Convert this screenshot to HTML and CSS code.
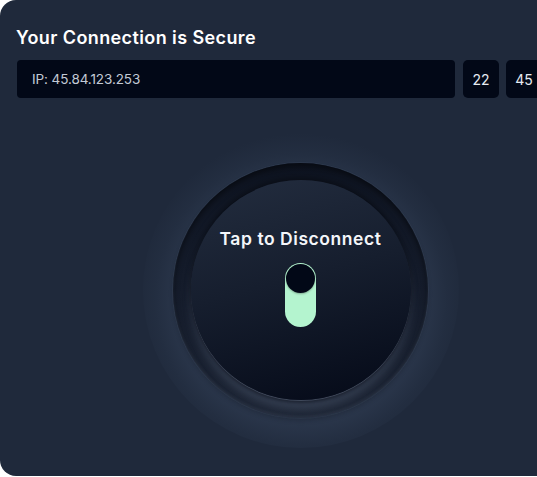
FILE: index.html
```html
<!DOCTYPE html>
<html lang="en">
<head>
<meta charset="utf-8">
<title>VPN</title>
<link rel="stylesheet" href="styles.css">
</head>
<body>
<div class="card">
  <h1 class="title">Your Connection is Secure</h1>
  <div class="info-row">
    <div class="ip-box">IP: 45.84.123.253</div>
    <div class="num-box">22</div>
    <div class="num-box">45</div>
    <div class="num-box">10</div>
  </div>
  <div class="stage">
    <div class="halo">
      <div class="rim">
        <button class="disc" type="button">
          <span class="disc-label">Tap to Disconnect</span>
          <span class="toggle"><span class="knob"></span></span>
        </button>
      </div>
    </div>
  </div>
</div>
</body>
</html>
```

FILE: styles.css
```css
html, body {
  margin: 0;
  padding: 0;
  background: #ffffff;
  overflow: hidden;
}

body {
  font-family: "Inter", "Noto Sans", sans-serif;
  width: 537px;
  height: 477px;
}

.card {
  box-sizing: border-box;
  width: 600px;
  height: 476px;
  background: #1f293b;
  border-radius: 16px;
  padding: 25px 15px 0 17px;
  display: flex;
  flex-direction: column;
}

.title {
  margin: 0 0 0 -1px;
  font-size: 18px;
  line-height: 26px;
  font-weight: 600;
  color: #ffffff;
  letter-spacing: 0.4px;
}

.info-row {
  margin-top: 9px;
  display: flex;
  gap: 7px;
  height: 38px;
}

.ip-box {
  flex: 1;
  background: #020817;
  border-radius: 4px;
  display: flex;
  align-items: center;
  padding-left: 15px;
  font-size: 13.5px;
  letter-spacing: -0.1px;
  color: #c3cad6;
}

.num-box {
  width: 36px;
  flex: none;
  background: #020817;
  border-radius: 5px;
  display: flex;
  align-items: center;
  justify-content: center;
  font-size: 14px;
  color: #e6ebf2;
}

.ip-box + .num-box {
  margin-left: 1px;
}

.stage {
  display: flex;
  justify-content: center;
  margin-top: 34px;
  padding-right: 1px;
}

.halo {
  width: 316px;
  height: 316px;
  border-radius: 50%;
  display: flex;
  align-items: center;
  justify-content: center;
  background: radial-gradient(circle 166px at 50% 53%, rgba(66, 82, 108, 0.5) 0%, rgba(60, 75, 100, 0.42) 72%, rgba(48, 62, 84, 0.22) 88%, rgba(31, 41, 59, 0) 100%);
}

.rim {
  width: 255px;
  height: 255px;
  border-radius: 50%;
  display: flex;
  align-items: center;
  justify-content: center;
  background: linear-gradient(180deg, #0e1421 0%, #141b2a 45%, #1d2535 100%);
  box-shadow:
    0 0 0 1px rgba(90, 105, 130, 0.14),
    0 3px 4px rgba(10, 15, 25, 0.25),
    inset 0 -2px 3px rgba(140, 155, 180, 0.12),
    inset 0 4px 6px rgba(0, 0, 0, 0.45);
}

.disc {
  width: 220px;
  height: 220px;
  border-radius: 50%;
  border: none;
  padding: 46px 0 0;
  margin: 0;
  cursor: pointer;
  display: flex;
  flex-direction: column;
  align-items: center;
  background: linear-gradient(165deg, #232d3f 0%, #161e2e 45%, #040917 100%);
  box-shadow:
    0 1px 0 rgba(150, 165, 190, 0.28),
    0 3px 3px rgba(8, 12, 22, 0.45),
    0 10px 9px rgba(120, 136, 162, 0.24),
    0 -3px 6px rgba(0, 0, 0, 0.35);
}

.disc-label {
  font-family: "Inter", "Noto Sans", sans-serif;
  font-size: 17.5px;
  line-height: 26px;
  font-weight: 600;
  color: #f4f6fa;
  letter-spacing: 0.55px;
}

.toggle {
  margin-top: 11px;
  width: 31px;
  height: 64px;
  border-radius: 16px;
  background: #b4f4cf;
  display: flex;
  flex-direction: column;
  align-items: center;
  padding-top: 1px;
  box-sizing: border-box;
}

.knob {
  width: 29px;
  height: 29px;
  border-radius: 50%;
  background: #020817;
  box-shadow: 0 1px 2px rgba(0, 0, 0, 0.3);
}
```
